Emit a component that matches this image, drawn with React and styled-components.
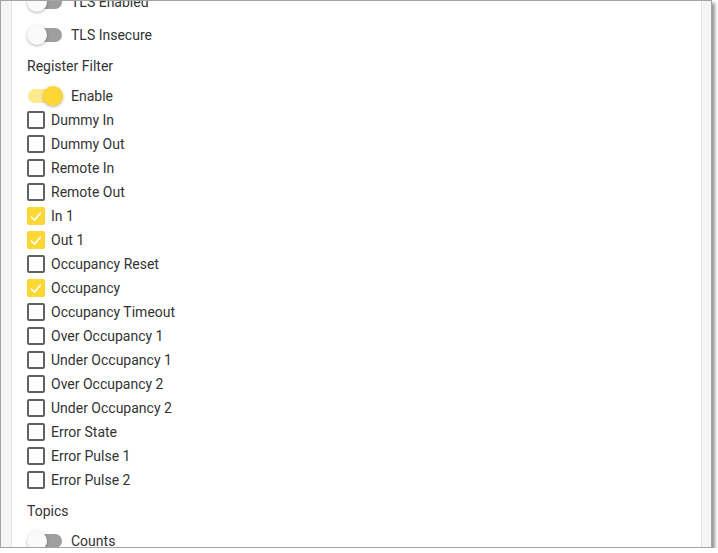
import React from 'react';
import styled, { createGlobalStyle } from 'styled-components';

const GlobalStyle = createGlobalStyle`
  html, body {
    margin: 0;
    padding: 0;
    background: #ffffff;
  }
  body {
    font-family: Roboto, "Noto Sans", Arial, sans-serif;
  }
`

const Window = styled.div`
  width: 710px;
  height: 546px;
  border: 1px solid #a4a4a4;
  box-shadow: 3px 3px 3px rgba(0, 0, 0, 0.4);
  background: #f5f5f5;
  overflow: hidden;
  display: flex;
`

const Card = styled.div`
  margin-left: 10px;
  width: 691px;
  background: #ffffff;
  border-left: 1px solid #e4e4e4;
  border-right: 1px solid #e4e4e4;
  padding-left: 15px;
  box-sizing: border-box;
`

const List = styled.div`
  margin-top: -11px;
  display: flex;
  flex-direction: column;
`

const SwitchGroup = styled.div`
  display: flex;
  flex-direction: column;
  gap: 9px;
  margin-bottom: 9px;
`

const Section = styled.div`
  display: flex;
  flex-direction: column;
  margin-bottom: 9px;
`

const SectionLabel = styled.div`
  height: 20px;
  line-height: 20px;
  font-size: 14px;
  color: #333;
  margin-bottom: 8px;
`

const Row = styled.label`
  display: flex;
  align-items: center;
  height: 24px;
  font-size: 14px;
  color: #333;
`

const SwitchBox = styled.span`
  position: relative;
  width: 36px;
  height: 24px;
  margin-right: 8px;
  flex-shrink: 0;
`

const Track = styled.span`
  position: absolute;
  left: 1px;
  top: 5px;
  width: 34px;
  height: 14px;
  border-radius: 7px;
  background: ${p => (p.$on ? '#fee98f' : '#9e9e9e')};
`

const Thumb = styled.span`
  position: absolute;
  top: 2px;
  left: ${p => (p.$on ? '16px' : '0')};
  width: 20px;
  height: 20px;
  border-radius: 50%;
  background: ${p => (p.$on ? '#fdd835' : '#fafafa')};
  box-shadow: 0 1px 3px rgba(0, 0, 0, 0.3);
`

const Box = styled.span`
  width: 18px;
  height: 18px;
  box-sizing: border-box;
  border-radius: 2px;
  margin-right: 6px;
  flex-shrink: 0;
  display: flex;
  align-items: center;
  justify-content: center;
  border: ${p => (p.$on ? 'none' : '2px solid #616161')};
  background: ${p => (p.$on ? '#fdd835' : 'transparent')};
`

const Switch = ({ on, label }) => (
    <Row>
        <SwitchBox>
            <Track $on={on} />
            <Thumb $on={on} />
        </SwitchBox>
        {label}
    </Row>
)

const Checkbox = ({ on, label }) => (
    <Row>
        <Box $on={on}>
            {on && (
                <svg width="18" height="18" viewBox="0 0 18 18">
                    <polyline points="4,9.5 7.5,13 14,5.5" fill="none" stroke="#fff" strokeWidth="1.6" />
                </svg>
            )}
        </Box>
        {label}
    </Row>
)

const filters = [
    ['Dummy In', false],
    ['Dummy Out', false],
    ['Remote In', false],
    ['Remote Out', false],
    ['In 1', true],
    ['Out 1', true],
    ['Occupancy Reset', false],
    ['Occupancy', true],
    ['Occupancy Timeout', false],
    ['Over Occupancy 1', false],
    ['Under Occupancy 1', false],
    ['Over Occupancy 2', false],
    ['Under Occupancy 2', false],
    ['Error State', false],
    ['Error Pulse 1', false],
    ['Error Pulse 2', false],
]

export default function App() {
    return (
        <>
            <GlobalStyle />
            <Window>
                <Card>
                    <List>
                        <SwitchGroup>
                            <Switch label="TLS Enabled" />
                            <Switch label="TLS Insecure" />
                        </SwitchGroup>
                        <Section>
                            <SectionLabel>Register Filter</SectionLabel>
                            <Switch on label="Enable" />
                            {filters.map(([name, on]) => (
                                <Checkbox key={name} on={on} label={name} />
                            ))}
                        </Section>
                        <Section>
                            <SectionLabel>Topics</SectionLabel>
                            <Switch label="Counts" />
                        </Section>
                    </List>
                </Card>
            </Window>
        </>
    )
}
